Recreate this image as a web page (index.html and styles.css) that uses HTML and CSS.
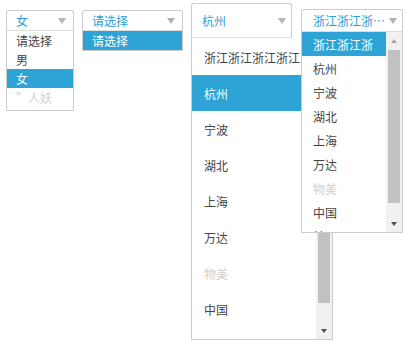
FILE: index.html
```html
<!DOCTYPE html>
<html lang="zh-CN">
<head>
  <meta charset="UTF-8" />
  <meta name="viewport" content="width=device-width, initial-scale=1.0" />
  <title>下拉选择</title>
  <link rel="stylesheet" href="styles.css">
</head>
<body>
  <div class="demo">
    <!-- 性别 -->
    <div class="select select-sex">
      <div class="select-head"><span class="select-value">女</span><i class="caret"></i></div>
      <ul class="select-list">
        <li class="option">请选择</li>
        <li class="option">男</li>
        <li class="option is-active">女</li>
        <li class="option is-disabled">”人妖</li>
      </ul>
    </div>

    <!-- 空选择 -->
    <div class="select select-empty">
      <div class="select-head"><span class="select-value">请选择</span><i class="caret"></i></div>
      <ul class="select-list">
        <li class="option is-active">请选择</li>
      </ul>
    </div>

    <!-- 城市 大行高 -->
    <div class="select select-big">
      <div class="select-head"><span class="select-value">杭州</span><i class="caret"></i></div>
      <div class="select-list has-scroll">
        <ul class="options">
          <li class="option">浙江浙江浙江浙江</li>
          <li class="option is-active">杭州</li>
          <li class="option">宁波</li>
          <li class="option">湖北</li>
          <li class="option">上海</li>
          <li class="option">万达</li>
          <li class="option is-disabled">物美</li>
          <li class="option">中国</li>
          <li class="option">韩国</li>
        </ul>
        <div class="scrollbar">
          <span class="sb-btn sb-up"></span>
          <span class="sb-track"><span class="sb-thumb"></span></span>
          <span class="sb-btn sb-down"></span>
        </div>
      </div>
    </div>

    <!-- 城市 小行高 -->
    <div class="select select-small">
      <div class="select-head"><span class="select-value">浙江浙江浙江浙江</span><i class="caret"></i></div>
      <div class="select-list has-scroll">
        <ul class="options">
          <li class="option is-active">浙江浙江浙</li>
          <li class="option">杭州</li>
          <li class="option">宁波</li>
          <li class="option">湖北</li>
          <li class="option">上海</li>
          <li class="option">万达</li>
          <li class="option is-disabled">物美</li>
          <li class="option">中国</li>
          <li class="option">韩国</li>
        </ul>
        <div class="scrollbar">
          <span class="sb-btn sb-up"></span>
          <span class="sb-track"><span class="sb-thumb"></span></span>
          <span class="sb-btn sb-down"></span>
        </div>
      </div>
    </div>
  </div>
</body>
</html>
```

FILE: styles.css
```css
* {
  box-sizing: border-box;
}
html, body {
  height: 100%;
}
body {
  margin: 0;
  background-color: #fff;
  font-family: "Noto Sans CJK SC", "Noto Sans", sans-serif;
  font-size: 12px;
  color: #444;
}
.demo {
  display: flex;
  align-items: flex-start;
  gap: 8px;
  min-height: 100%;
  padding-left: 6px;
}
.select {
  position: relative;
  flex: none;
}
.select-head {
  display: flex;
  align-items: center;
  justify-content: space-between;
  gap: 6px;
  height: 21px;
  padding: 0 7px 0 9px;
  background: #fff;
  border: 1px solid #ccc;
  border-bottom-color: #ddd;
  border-radius: 3px 3px 0 0;
  color: #2a9fd6;
}
.select-value {
  white-space: nowrap;
  overflow: hidden;
  text-overflow: ellipsis;
}
.caret {
  flex: none;
  width: 0;
  height: 0;
  border-top: 6px solid #b3b3b3;
  border-left: 4.5px solid transparent;
  border-right: 4.5px solid transparent;
}
.select-list {
  position: absolute;
  top: 100%;
  left: 0;
  margin: 0;
  padding: 0;
  list-style: none;
  background: #fff;
  border: 1px solid #ccc;
  border-top: none;
  z-index: 10;
}
.options {
  margin: 0;
  padding: 0;
  list-style: none;
  flex: 1;
  overflow: hidden;
}
.option {
  display: flex;
  align-items: center;
  height: 19px;
  padding: 0 9px;
  white-space: nowrap;
  color: #444;
}
.option.is-active {
  background-color: #2ea3d6;
  color: #fff;
}
.option.is-disabled {
  color: #cfcfcf;
}

/* select 1 */
.select-sex {
  width: 68px;
  margin-top: 10px;
}
.select-sex .select-list {
  width: 100%;
  padding-bottom: 3px;
}

/* select 2 */
.select-empty {
  width: 101px;
  margin-top: 10px;
}
.select-empty .select-list {
  width: 100%;
}

/* select 3 */
.select-big {
  width: 101px;
  margin-top: 3px;
}
.select-big .select-head {
  height: 35px;
  padding: 0 5px 0 10px;
}
.select-big .select-list {
  width: 142px;
  height: 302px;
  display: flex;
  padding-top: 1px;
}
.select-big .option {
  height: 36px;
  padding: 0 12px;
}
.select-big .sb-thumb {
  margin-top: 2px;
  height: 245px;
}

/* select 4 */
.select-small {
  width: 102px;
  margin-top: 9px;
  margin-left: 1px;
  z-index: 20;
}
.select-small .select-head {
  height: 23px;
  gap: 2px;
  padding: 0 5px 0 11px;
}
.select-small .select-list {
  width: 100%;
  height: 201px;
  display: flex;
}
.select-small .option {
  height: 24px;
  padding: 0 11px;
}
.select-small .sb-thumb {
  margin-top: 1px;
  height: 153px;
}

/* scrollbar */
.scrollbar {
  flex: none;
  width: 16px;
  display: flex;
  flex-direction: column;
  background: #f1f1f1;
}
.sb-btn {
  flex: none;
  height: 17px;
  display: flex;
  align-items: center;
  justify-content: center;
}
.sb-up::before,
.sb-down::before {
  content: "";
  width: 0;
  height: 0;
  border-left: 3.5px solid transparent;
  border-right: 3.5px solid transparent;
}
.sb-up::before {
  border-bottom: 4px solid #a3a3a3;
}
.sb-down::before {
  border-top: 4px solid #505050;
}
.sb-track {
  flex: 1;
  display: flex;
  flex-direction: column;
  padding: 0 2px;
}
.sb-thumb {
  display: block;
  background: #c1c1c1;
}
```
